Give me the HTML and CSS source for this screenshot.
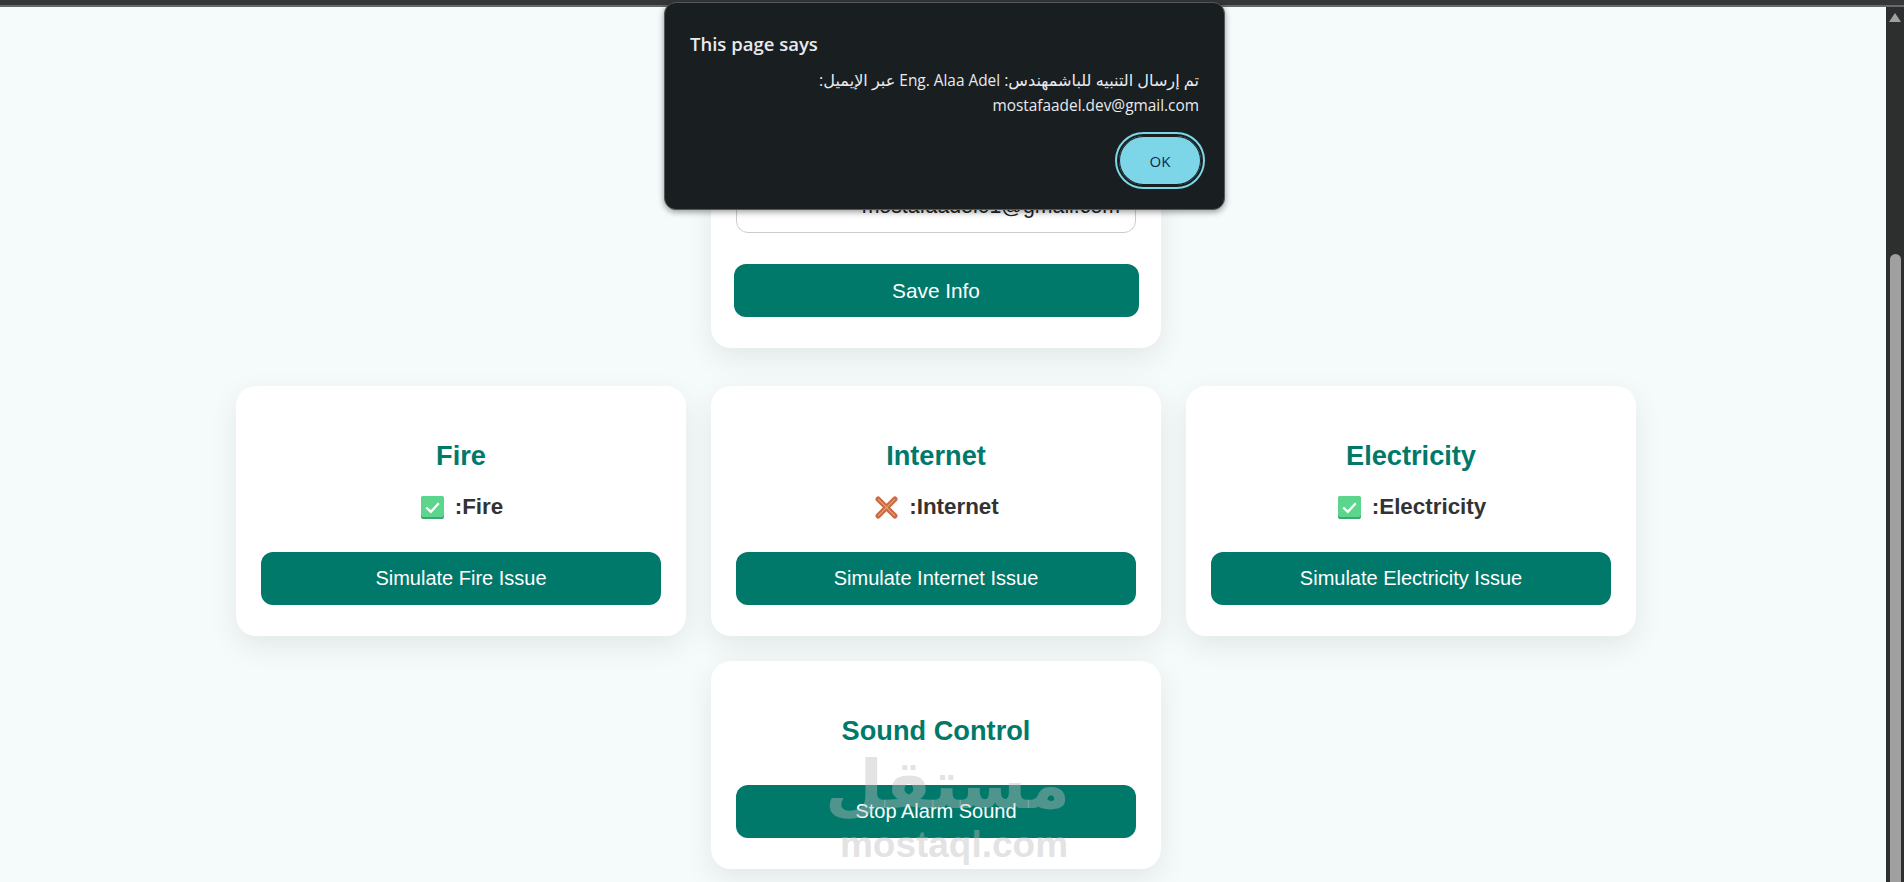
FILE: index.html
```html
<!DOCTYPE html>
<html lang="en">
<head>
  <meta charset="UTF-8" />
  <meta name="viewport" content="width=device-width, initial-scale=1.0"/>
  <title>Alarm Dashboard</title>
  <link rel="stylesheet" href="styles.css">
</head>
<body>
<div class="top-bar"></div>

<div class="shell">
  <main class="page">
    <div class="grid">

      <!-- Engineer info -->
      <section class="card card-info">
        <input class="field" type="text" value="Eng. Alaa Adel" />
        <input class="field" type="text" value="mostafaadel01@gmail.com" />
        <button class="btn btn-save">Save Info</button>
      </section>

      <section class="card card-fire">
        <h2>Fire</h2>
        <p class="status">
          <svg class="emoji" viewBox="0 0 22 22"><rect width="22" height="22" rx="2.5" fill="#3ea873"/><rect width="22" height="20" rx="2.5" fill="#5cd68d"/><path d="M5 11l4.4 4.2L17 7" fill="none" stroke="#fff" stroke-width="2.2"/></svg>
          <span>:Fire</span>
        </p>
        <button class="btn">Simulate Fire Issue</button>
      </section>

      <section class="card">
        <h2>Internet</h2>
        <p class="status">
          <svg class="emoji" viewBox="0 0 22 22"><path d="M3 3l16 16M19 3L3 19" stroke="#c96a3f" stroke-width="5" stroke-linecap="round"/><path d="M3 3l16 16M19 3L3 19" stroke="#eea27c" stroke-width="1"/></svg>
          <span>:Internet</span>
        </p>
        <button class="btn">Simulate Internet Issue</button>
      </section>

      <section class="card">
        <h2>Electricity</h2>
        <p class="status">
          <svg class="emoji" viewBox="0 0 22 22"><rect width="22" height="22" rx="2.5" fill="#3ea873"/><rect width="22" height="20" rx="2.5" fill="#5cd68d"/><path d="M5 11l4.4 4.2L17 7" fill="none" stroke="#fff" stroke-width="2.2"/></svg>
          <span>:Electricity</span>
        </p>
        <button class="btn">Simulate Electricity Issue</button>
      </section>

      <section class="card card-sound">
        <h2>Sound Control</h2>
        <button class="btn">Stop Alarm Sound</button>
      </section>

    </div>
  </main>

  <!-- Browser scrollbar -->
  <aside class="scrollbar">
    <div class="scroll-arrow"></div>
    <div class="scroll-thumb"></div>
  </aside>
</div>

<!-- alert() dialog -->
<div class="dialog">
  <div class="dialog-title">This page says</div>
  <p class="dialog-text" dir="rtl"><span class="dialog-ar">تم إرسال التنبيه للباشمهندس:</span> Eng. Alaa Adel <span class="dialog-ar">عبر الإيميل:</span> mostafaadel.dev@gmail.com</p>
  <div class="dialog-actions">
    <button class="dialog-ok">OK</button>
  </div>
</div>

<!-- Site watermark -->
<div class="watermark">
  <div class="watermark-ar" dir="rtl">مستقل</div>
  <div class="watermark-en">mostaql.com</div>
</div>

</body>
</html>
```

FILE: styles.css
```css
* {
  box-sizing: border-box;
}

body {
  margin: 0;
  height: 100vh;
  overflow: hidden;
  display: flex;
  flex-direction: column;
  font-family: "Liberation Sans", sans-serif;
  background-color: #f4fbfa;
}

.top-bar {
  height: 7px;
  background-color: #343638;
  border-bottom: 2px solid #66686a;
}

.shell {
  flex: 1;
  display: flex;
  min-height: 0;
}

.page {
  flex: 1;
  padding: 15px 0 0 236px;
}

.grid {
  display: grid;
  grid-template-columns: repeat(3, 450px);
  gap: 25px;
}

.card {
  display: flex;
  flex-direction: column;
  align-items: center;
  padding: 55px 25px 31px;
  background-color: #ffffff;
  border-radius: 20px;
  box-shadow: 0 10px 30px rgba(0, 0, 0, 0.08);
}

.card-info {
  grid-column: 2;
  padding-top: 91px;
  margin-bottom: 13px;
}

.card-fire {
  grid-column: 1;
}

.card-sound {
  grid-column: 2;
}

.card-sound .btn {
  margin-top: 16px;
}

.card h2 {
  margin: 0 0 23px;
  font-size: 27.2px;
  line-height: 30px;
  font-weight: 700;
  color: #00796b;
}

.status {
  display: flex;
  align-items: center;
  gap: 11px;
  height: 26px;
  margin: 0 0 32px;
  padding-left: 2px;
  font-size: 22.4px;
  font-weight: 700;
  color: #333333;
}

.emoji {
  width: 23px;
  height: 23px;
}

.field {
  width: 400px;
  height: 50px;
  flex: none;
  margin-bottom: 20px;
  padding: 0 15px 4px;
  font-family: inherit;
  font-size: 21.3px;
  text-align: right;
  color: #222222;
  background-color: #ffffff;
  border: 1px solid #cccccc;
  border-radius: 12px;
}

.btn {
  width: 400px;
  height: 53px;
  flex: none;
  font-family: inherit;
  font-size: 20px;
  color: #ffffff;
  background-color: #00796b;
  border: none;
  border-radius: 12px;
}

.btn-save {
  width: 405px;
  margin-top: 11px;
  font-size: 20.8px;
}

/* scrollbar */
.scrollbar {
  width: 18px;
  display: flex;
  flex-direction: column;
  align-items: center;
  background-color: #2d2f2e;
}

.scroll-arrow {
  width: 0;
  height: 0;
  margin-top: 6px;
  border-left: 6px solid transparent;
  border-right: 6px solid transparent;
  border-bottom: 9px solid #a0a0a0;
}

.scroll-thumb {
  flex: 1;
  width: 11px;
  margin-top: 232px;
  background-color: #a0a0a0;
  border-radius: 6px 6px 0 0;
}

/* alert dialog */
.dialog {
  position: absolute;
  top: 2px;
  left: 664px;
  width: 561px;
  height: 208px;
  padding: 29px 25px 0 25px;
  font-family: "Open Sans", "DejaVu Sans", sans-serif;
  color: #e8eaed;
  background-color: #191e21;
  border: 1px solid #55585a;
  border-radius: 12px;
  box-shadow: 0 2px 6px rgba(0, 0, 0, 0.4);
}

.dialog-title {
  font-size: 18.5px;
  line-height: 24px;
  font-weight: 600;
}

.dialog-text {
  margin: 12px 0 0;
  font-size: 15.4px;
  line-height: 25px;
}

.dialog-ar {
  font-size: 16.1px;
}

.dialog-actions {
  display: flex;
  justify-content: flex-end;
  margin-top: 16px;
}

.dialog-ok {
  width: 86px;
  height: 53px;
  margin-right: -4px;
  font-family: inherit;
  font-size: 15px;
  color: #0b2a4a;
  background-color: #7dd6e8;
  border: 2px solid #191e21;
  border-radius: 27px;
  outline: 2px solid #7dd6e8;
  box-shadow: inset 0 0 0 1px #191e21;
}

/* watermark */
.watermark {
  position: absolute;
  top: 745px;
  left: 838px;
  width: 232px;
  text-align: center;
  color: rgba(188, 188, 188, 0.42);
  font-weight: 700;
  pointer-events: none;
}

.watermark-ar {
  font-family: "DejaVu Sans", sans-serif;
  font-size: 67px;
  line-height: 81px;
}

.watermark-en {
  font-size: 37px;
  line-height: 38px;
  white-space: nowrap;
}
```
